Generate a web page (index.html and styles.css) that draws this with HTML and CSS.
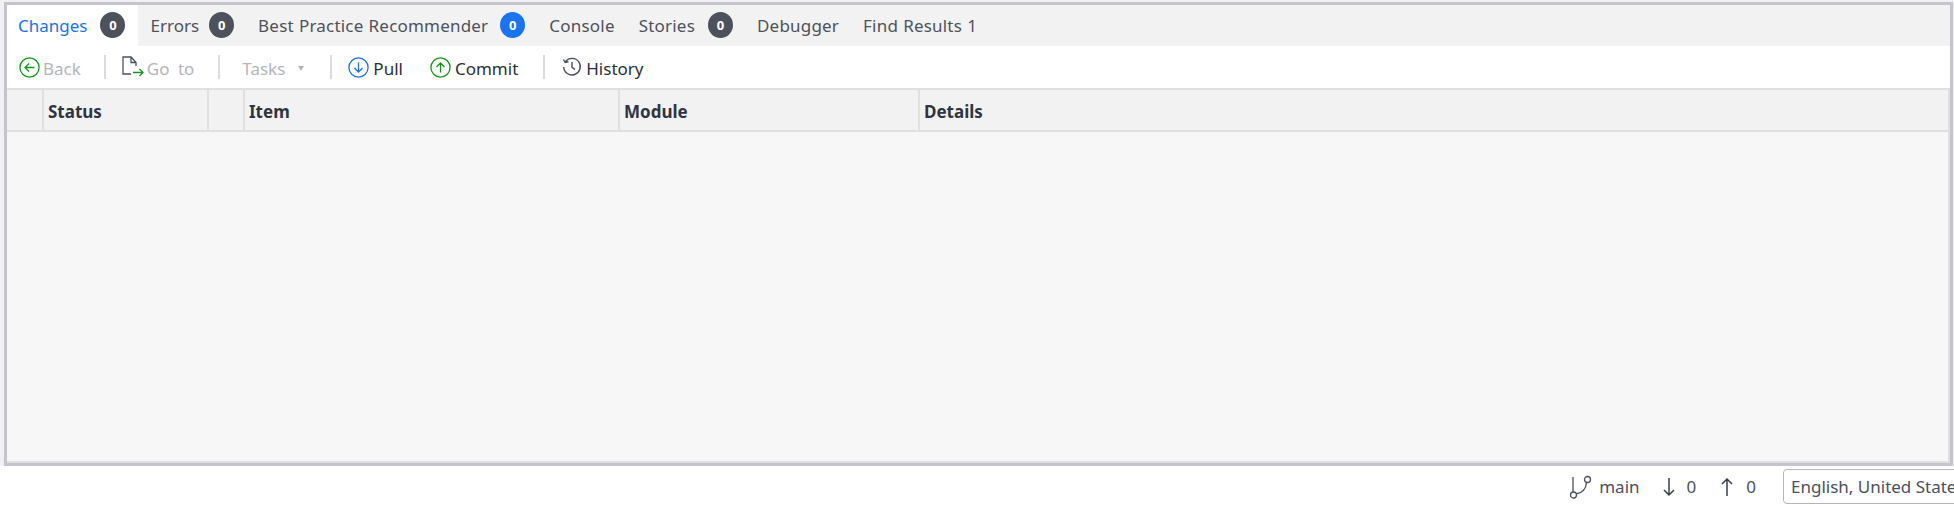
FILE: index.html
```html
<!DOCTYPE html>
<html lang="en">
  <head>
    <meta charset="UTF-8" />
    <title>Changes</title>
    <link rel="stylesheet" href="styles.css">
  </head>
  <body>
    <div class="frame">
      <div class="panel">
        <div class="tabs">
          <div class="tab active">Changes <span class="badge">0</span></div>
          <div class="tab errors">Errors <span class="badge">0</span></div>
          <div class="tab">Best Practice Recommender <span class="badge blue">0</span></div>
          <div class="tab">Console</div>
          <div class="tab">Stories <span class="badge">0</span></div>
          <div class="tab">Debugger</div>
          <div class="tab">Find Results 1</div>
        </div>
        <div class="toolbar">
          <div class="tool disabled back">
            <svg width="21" height="21" viewBox="0 0 21 21" fill="none" stroke="#119a1a" stroke-width="1.3"><circle cx="10.5" cy="10.5" r="9.6"/><path d="M15.5 10.5H6M10 6.5l-4 4 4 4"/></svg>
            <span>Back</span>
          </div>
          <div class="sep"></div>
          <div class="tool disabled goto">
            <svg width="22" height="22" viewBox="0 0 22 22" fill="none" stroke-width="1.3"><path stroke="#4d515c" d="M9 18H1V1h8l5 5.500V10M9 1v5.500h5"/><path stroke="#119a1a" d="M11 16.500h10M17.500 13l3.500 3.500-3.500 3.500"/></svg>
            <span>Go to</span>
          </div>
          <div class="sep"></div>
          <div class="tool disabled tasks"><span>Tasks</span><span class="caret"></span></div>
          <div class="sep"></div>
          <div class="tool pull">
            <svg width="21" height="21" viewBox="0 0 21 21" fill="none" stroke="#1a73f0" stroke-width="1.3"><circle cx="10.500" cy="10.500" r="9.600"/><path d="M10.500 5.500V15M6.500 11l4 4 4-4"/></svg>
            <span>Pull</span>
          </div>
          <div class="tool commit">
            <svg width="21" height="21" viewBox="0 0 21 21" fill="none" stroke="#119a1a" stroke-width="1.3"><circle cx="10.500" cy="10.500" r="9.600"/><path d="M10.500 15.500V6M6.500 10l4-4 4 4"/></svg>
            <span>Commit</span>
          </div>
          <div class="sep"></div>
          <div class="tool history">
            <svg width="20" height="20" viewBox="0 0 20 20" fill="none" stroke="#4d515c" stroke-width="1.400"><path d="M3.500 4.500A8.300 8.300 0 1 1 1.700 10M1.500 2.500l1.700 3 3.300-.8M10 5v5.300l3 2"/></svg>
            <span>History</span>
          </div>
        </div>
        <div class="table">
          <div class="thead">
            <div class="th c-icon"></div>
            <div class="th c-status">Status</div>
            <div class="th c-flag"></div>
            <div class="th c-item">Item</div>
            <div class="th c-module">Module</div>
            <div class="th c-details">Details</div>
          </div>
          <div class="tbody"></div>
        </div>
      </div>
    </div>
    <div class="statusbar">
      <div class="stat branch">
        <svg width="24" height="24" viewBox="0 0 24 24" fill="none" stroke="#4d515c" stroke-width="1.300"><circle cx="4.500" cy="20" r="3"/><circle cx="18.500" cy="4.500" r="3"/><path d="M4 17V2M7 19c6-1 10-5 10.500-11.500"/></svg>
        <span>main</span>
      </div>
      <div class="stat down">
        <svg width="14" height="20" viewBox="0 0 14 20" fill="none" stroke="#3a3f4a" stroke-width="1.500"><path d="M7 1v17M2 13l5 5 5-5"/></svg>
        <span>0</span>
      </div>
      <div class="stat up">
        <svg width="14" height="20" viewBox="0 0 14 20" fill="none" stroke="#3a3f4a" stroke-width="1.500"><path d="M7 19V2M2 7l5-5 5 5"/></svg>
        <span>0</span>
      </div>
      <div class="lang">English, United States</div>
    </div>
  </body>
</html>
```

FILE: styles.css
```css
* {
  box-sizing: border-box;
  margin: 0;
  padding: 0;
}
html,
body {
  height: 100%;
  overflow: hidden;
}
body {
  font-family: "Noto Sans", sans-serif;
  font-size: 17px;
  background: #ffffff;
  color: #4d515c;
}
.frame {
  height: 466px;
  padding: 2px 1px 0 4px;
  background: #f0f0f5;
}
.panel {
  height: 464px;
  border: 3px solid #c4c4cc;
  display: flex;
  flex-direction: column;
}
.tabs {
  height: 41px;
  display: flex;
  background: #f2f2f2;
}
.tab {
  display: flex;
  align-items: center;
  padding: 0 12px 1px;
  white-space: nowrap;
  letter-spacing: 0.2px;
  word-spacing: 0.5px;
}
.tab.active {
  background: #ffffff;
  color: #1a73f0;
  padding: 0 13px 1px 11px;
  letter-spacing: 0;
}
.tab.errors {
  letter-spacing: 0;
}
.badge {
  width: 25px;
  height: 26px;
  margin-left: 13px;
  border-radius: 50%;
  background: #4d515c;
  color: #ffffff;
  font-size: 13px;
  font-weight: 700;
  display: flex;
  align-items: center;
  justify-content: center;
}
.errors .badge {
  margin-left: 10px;
}
.badge.blue {
  background: #1a73f0;
  margin-left: 12px;
}
.toolbar {
  height: 42px;
  display: flex;
  align-items: center;
  padding-left: 12px;
  background: #ffffff;
  color: #2b2f3a;
}
.tool {
  display: flex;
  align-items: center;
  gap: 4px;
}
.tool span {
  position: relative;
  top: 1px;
}
.tool.disabled {
  color: #b4b6bc;
}
.sep {
  width: 2px;
  height: 24px;
  background: #dcdcdc;
}
.back {
  margin-right: 23px;
  gap: 3px;
}
.goto {
  margin-left: 16px;
  margin-right: 24px;
  gap: 3px;
  word-spacing: 4px;
}
.tasks {
  margin-left: 22px;
  margin-right: 26px;
}
.tool .caret {
  width: 0;
  height: 0;
  margin-left: 9px;
  border-left: 3.5px solid transparent;
  border-right: 3.5px solid transparent;
  border-top: 5px solid #b4b6bc;
}
.pull {
  margin-left: 16px;
}
.commit {
  margin-left: 27px;
  margin-right: 25px;
}
.history {
  margin-left: 17px;
  gap: 4px;
}
.table {
  flex: 1;
  display: flex;
  flex-direction: column;
  background: #f7f7f7;
  border-right: 2px solid #e0e0e0;
  border-bottom: 2px solid #e0e0e0;
}
.thead {
  height: 44px;
  display: flex;
  background: #f2f2f2;
  border-top: 2px solid #e0e0e0;
  border-bottom: 2px solid #e0e0e0;
  font-weight: 700;
  color: #2f3442;
}
.th {
  display: flex;
  align-items: center;
  padding: 3px 0 0 4px;
  border-right: 2px solid #e0e0e0;
}
.c-icon {
  width: 37px;
}
.c-status {
  width: 165px;
}
.c-flag {
  width: 36px;
}
.c-item {
  width: 375px;
}
.c-module {
  width: 300px;
}
.c-details {
  flex: 1;
  border-right: none;
}
.tbody {
  flex: 1;
}
.statusbar {
  height: 39px;
  padding-top: 2px;
  display: flex;
  align-items: center;
  justify-content: flex-end;
  color: #4d515c;
  white-space: nowrap;
}
.stat {
  display: flex;
  align-items: center;
  gap: 6px;
}
.down {
  margin-left: 22px;
  gap: 11px;
}
.up {
  margin-left: 24px;
  gap: 12px;
}
.lang {
  width: 200px;
  flex: none;
  height: 35px;
  margin-left: 27px;
  margin-right: -29px;
  padding-left: 7px;
  overflow: hidden;
  border: 1px solid #b4b6bc;
  border-radius: 4px;
  display: flex;
  align-items: center;
}
```
